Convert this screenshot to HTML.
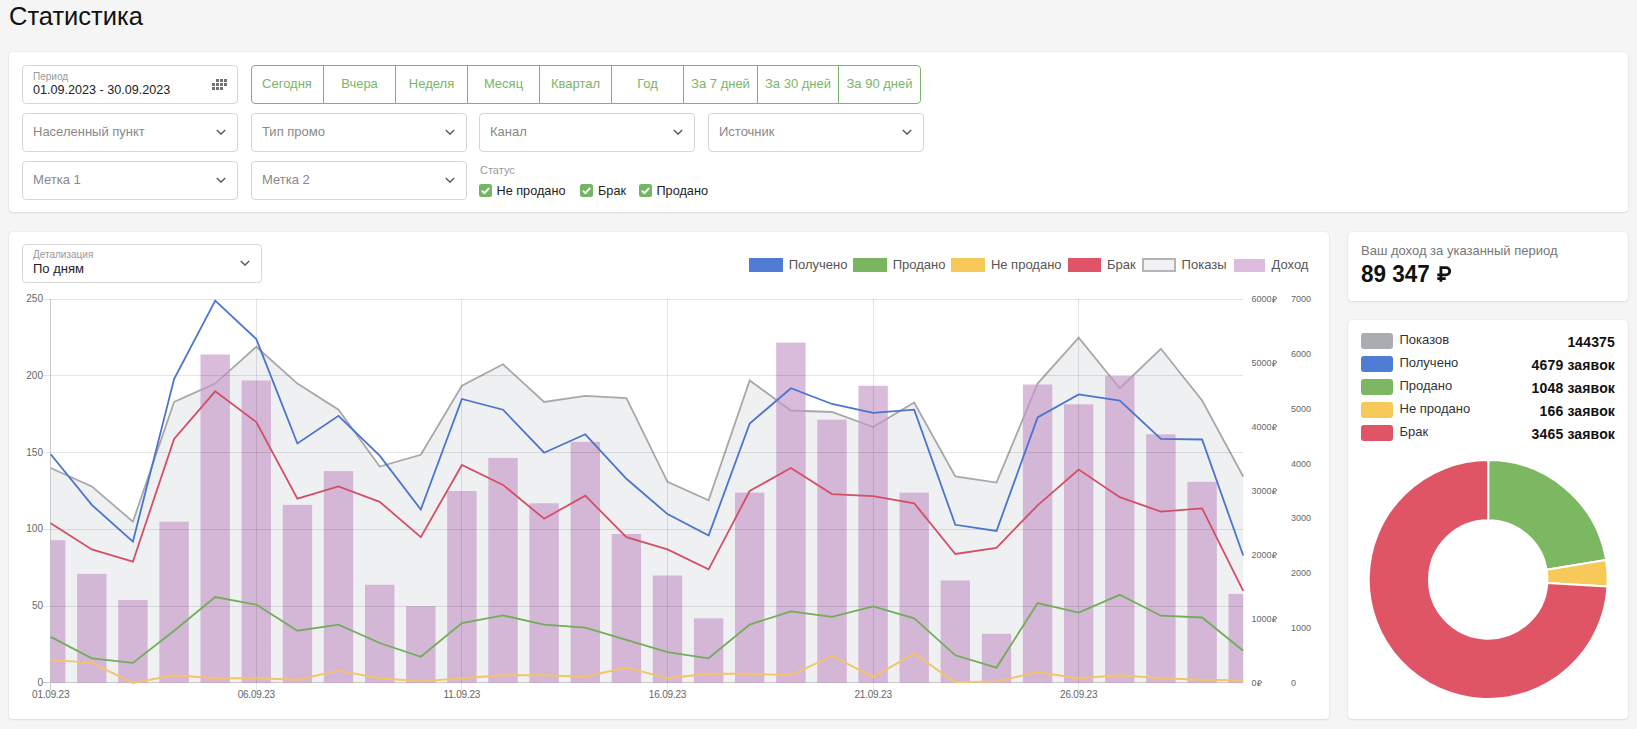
<!DOCTYPE html>
<html><head><meta charset="utf-8"><style>
*{margin:0;padding:0;box-sizing:border-box}
html,body{width:1637px;height:729px;overflow:hidden;background:#f5f5f5;font-family:"Liberation Sans",sans-serif;color:#222;position:relative}
.abs{position:absolute}
h1{position:absolute;left:9px;top:2px;font-size:25.5px;font-weight:normal;color:#111;letter-spacing:0}
.card{position:absolute;background:#fff;border-radius:4px;box-shadow:0 0 2px rgba(0,0,0,0.10),0 1px 2px rgba(0,0,0,0.08)}
.inp{position:absolute;left:22px;top:65px;width:216px;height:39px;border:1px solid #d6d6d6;border-radius:4px;background:#fff}
.inp .lab{position:absolute;left:10px;top:4.5px;font-size:10px;color:#999}
.inp .val{position:absolute;left:10px;top:17px;font-size:12.6px;color:#222}
.sq{position:absolute;width:3px;height:3px;background:#727272}
.btns{position:absolute;left:251px;top:65px;width:670px;height:39px;border:1px solid #7cb46b;border-radius:4px;overflow:hidden}
.btn{position:absolute;top:0;height:100%;border-left:1px solid #7cb46b;color:#7cb46b;font-size:13px;text-align:center;line-height:36px}
.btn:first-child{border-left:none}
.sel{position:absolute;height:39px;border:1px solid #d6d6d6;border-radius:4px;background:#fff}
.sel .ph{position:absolute;left:10px;top:10.2px;font-size:13px;color:#888}
.chev{position:absolute;right:11px;top:15px}
.stat{position:absolute;left:480px;top:163.5px;font-size:11px;color:#999}
.cb{position:absolute;top:183.5px;height:14px;font-size:12.7px;color:#222;display:flex;align-items:center}
.cb svg{margin-right:5px}
.det{position:absolute;left:22px;top:244px;width:240px;height:39px;border:1px solid #d6d6d6;border-radius:4px}
.det .lab{position:absolute;left:10px;top:4px;font-size:10px;color:#999}
.det .val{position:absolute;left:10px;top:16px;font-size:13px;color:#222}
.det .chev{right:11px;top:15px}
.lbox{position:absolute;top:258px;width:33.5px;height:14px}
.ltxt{position:absolute;top:257px;font-size:13px;color:#555}
.yl{position:absolute;left:0;width:43px;text-align:right;font-size:10px;color:#666}
.xl{position:absolute;top:689px;width:60px;text-align:center;font-size:10px;letter-spacing:-0.2px;color:#666}
.rl1{position:absolute;left:1251.5px;font-size:9px;color:#666}
.rl2{position:absolute;left:1291px;font-size:9px;color:#666}
.rub{display:inline-block;vertical-align:baseline}
.inc1{position:absolute;left:1361px;top:243px;font-size:13px;color:#777}
.inc2{position:absolute;left:1361px;top:261.5px;transform:scaleY(1.07);transform-origin:0 21px;font-size:22.5px;font-weight:bold;color:#111}
.pbox{position:absolute;left:1361px;width:32px;height:15.5px;border-radius:3px}
.ptxt{position:absolute;left:1399.5px;font-size:13px;color:#333}
.pval{position:absolute;right:22px;font-size:14px;font-weight:bold;color:#111;text-align:right;letter-spacing:0.15px;margin-top:0.5px}
</style></head><body>
<h1>Статистика</h1>
<div class="card" style="left:9px;top:52px;width:1619px;height:160px"></div>
<div class="inp"><div class="lab">Период</div><div class="val">01.09.2023 - 30.09.2023</div></div>
<div class="sq" style="left:216px;top:79px"></div><div class="sq" style="left:220px;top:79px"></div><div class="sq" style="left:224px;top:79px"></div><div class="sq" style="left:212px;top:83px"></div><div class="sq" style="left:216px;top:83px"></div><div class="sq" style="left:220px;top:83px"></div><div class="sq" style="left:224px;top:83px"></div><div class="sq" style="left:212px;top:87px"></div><div class="sq" style="left:216px;top:87px"></div><div class="sq" style="left:220px;top:87px"></div>
<div class="btns"><div class="btn" style="left:-1.0px;width:72.0px">Сегодня</div><div class="btn" style="left:71.0px;width:72.0px">Вчера</div><div class="btn" style="left:143.0px;width:72.0px">Неделя</div><div class="btn" style="left:215.0px;width:72.0px">Месяц</div><div class="btn" style="left:287.0px;width:72.0px">Квартал</div><div class="btn" style="left:359.0px;width:72.0px">Год</div><div class="btn" style="left:431.0px;width:74.0px">За 7 дней</div><div class="btn" style="left:505.0px;width:81.0px">За 30 дней</div><div class="btn" style="left:586.0px;width:82.0px">За 90 дней</div></div>
<div class="sel" style="left:22px;top:113px;width:216px"><span class="ph">Населенный пункт</span><svg class="chev" width="10" height="6" viewBox="0 0 10 6"><path d="M0.8 0.9l4.2 4.2 4.2-4.2" fill="none" stroke="#5a5a5a" stroke-width="1.4"/></svg></div>
<div class="sel" style="left:251px;top:113px;width:216px"><span class="ph">Тип промо</span><svg class="chev" width="10" height="6" viewBox="0 0 10 6"><path d="M0.8 0.9l4.2 4.2 4.2-4.2" fill="none" stroke="#5a5a5a" stroke-width="1.4"/></svg></div>
<div class="sel" style="left:479px;top:113px;width:216px"><span class="ph">Канал</span><svg class="chev" width="10" height="6" viewBox="0 0 10 6"><path d="M0.8 0.9l4.2 4.2 4.2-4.2" fill="none" stroke="#5a5a5a" stroke-width="1.4"/></svg></div>
<div class="sel" style="left:708px;top:113px;width:216px"><span class="ph">Источник</span><svg class="chev" width="10" height="6" viewBox="0 0 10 6"><path d="M0.8 0.9l4.2 4.2 4.2-4.2" fill="none" stroke="#5a5a5a" stroke-width="1.4"/></svg></div>
<div class="sel" style="left:22px;top:161px;width:216px"><span class="ph">Метка 1</span><svg class="chev" width="10" height="6" viewBox="0 0 10 6"><path d="M0.8 0.9l4.2 4.2 4.2-4.2" fill="none" stroke="#5a5a5a" stroke-width="1.4"/></svg></div>
<div class="sel" style="left:251px;top:161px;width:216px"><span class="ph">Метка 2</span><svg class="chev" width="10" height="6" viewBox="0 0 10 6"><path d="M0.8 0.9l4.2 4.2 4.2-4.2" fill="none" stroke="#5a5a5a" stroke-width="1.4"/></svg></div>
<div class="stat">Статус</div>
<div class="cb" style="left:478.5px"><svg width="13" height="13" viewBox="0 0 13 13"><rect x="0" y="0" width="13" height="13" rx="2.5" fill="#73b563"/><path d="M2.8 6.6l2.6 2.6 4.8-5.2" fill="none" stroke="#fff" stroke-width="1.9"/></svg>Не продано</div>
<div class="cb" style="left:580px"><svg width="13" height="13" viewBox="0 0 13 13"><rect x="0" y="0" width="13" height="13" rx="2.5" fill="#73b563"/><path d="M2.8 6.6l2.6 2.6 4.8-5.2" fill="none" stroke="#fff" stroke-width="1.9"/></svg>Брак</div>
<div class="cb" style="left:638.5px"><svg width="13" height="13" viewBox="0 0 13 13"><rect x="0" y="0" width="13" height="13" rx="2.5" fill="#73b563"/><path d="M2.8 6.6l2.6 2.6 4.8-5.2" fill="none" stroke="#fff" stroke-width="1.9"/></svg>Продано</div>

<div class="card" style="left:9px;top:232px;width:1320px;height:487px"></div>
<div class="det"><div class="lab">Детализация</div><div class="val">По дням</div><svg class="chev" width="10" height="6" viewBox="0 0 10 6"><path d="M0.8 0.9l4.2 4.2 4.2-4.2" fill="none" stroke="#5a5a5a" stroke-width="1.4"/></svg></div>
<div class="lbox" style="left:749px;background:#4f7cd5;"></div><div class="ltxt" style="left:788.7px">Получено</div><div class="lbox" style="left:853px;background:#7ab660;"></div><div class="ltxt" style="left:892.7px">Продано</div><div class="lbox" style="left:951.4px;background:#f7c85a;"></div><div class="ltxt" style="left:990.9px">Не продано</div><div class="lbox" style="left:1067.5px;background:#df5467;"></div><div class="ltxt" style="left:1107px">Брак</div><div class="lbox" style="left:1142px;background:#eff1f4;border:2px solid #b4b4b4;box-sizing:border-box;"></div><div class="ltxt" style="left:1181.6px">Показы</div><div class="lbox" style="left:1234px;background:#dcbcdf;width:31px;top:259px;height:12.5px;"></div><div class="ltxt" style="left:1271.5px">Доход</div>
<svg class="abs" style="left:0;top:0" width="1637" height="729" viewBox="0 0 1637 729">
<polygon points="50.7,682.9 50.7,468.0 91.8,486.4 132.9,521.7 174.1,402.0 215.2,383.6 256.3,346.8 297.4,383.6 338.5,409.7 379.7,466.5 420.8,454.8 461.9,385.8 503.0,364.3 544.1,402.0 585.3,395.9 626.4,398.2 667.5,481.8 708.6,500.3 749.7,380.5 790.9,410.5 832.0,412.0 873.1,427.0 914.2,402.5 955.3,476.5 996.5,482.6 1037.6,383.6 1078.7,337.6 1119.8,388.2 1160.9,348.8 1202.1,400.5 1243.2,476.5 1243.2,682.9" fill="#eff0f2"/>
<polyline points="50.7,468.0 91.8,486.4 132.9,521.7 174.1,402.0 215.2,383.6 256.3,346.8 297.4,383.6 338.5,409.7 379.7,466.5 420.8,454.8 461.9,385.8 503.0,364.3 544.1,402.0 585.3,395.9 626.4,398.2 667.5,481.8 708.6,500.3 749.7,380.5 790.9,410.5 832.0,412.0 873.1,427.0 914.2,402.5 955.3,476.5 996.5,482.6 1037.6,383.6 1078.7,337.6 1119.8,388.2 1160.9,348.8 1202.1,400.5 1243.2,476.5" fill="none" stroke="#a8a8a8" stroke-width="1.8"/>
<line x1="50.5" y1="299" x2="50.5" y2="690" stroke="#c8c8c8" stroke-width="1"/>
<line x1="43" y1="682.5" x2="1243" y2="682.5" stroke="#c8c8c8" stroke-width="1"/>
<g fill="rgba(196,150,200,0.65)">
<rect x="50.7" y="540.2" width="14.7" height="142.7"/>
<rect x="77.1" y="573.9" width="29.4" height="109.0"/>
<rect x="118.2" y="600.0" width="29.4" height="82.9"/>
<rect x="159.4" y="521.7" width="29.4" height="161.2"/>
<rect x="200.5" y="354.5" width="29.4" height="328.4"/>
<rect x="241.6" y="380.5" width="29.4" height="302.4"/>
<rect x="282.7" y="504.9" width="29.4" height="178.0"/>
<rect x="323.8" y="471.1" width="29.4" height="211.8"/>
<rect x="365.0" y="584.7" width="29.4" height="98.2"/>
<rect x="406.1" y="606.2" width="29.4" height="76.7"/>
<rect x="447.2" y="491.0" width="29.4" height="191.9"/>
<rect x="488.3" y="457.9" width="29.4" height="225.0"/>
<rect x="529.4" y="503.3" width="29.4" height="179.6"/>
<rect x="570.6" y="441.9" width="29.4" height="241.0"/>
<rect x="611.7" y="534.0" width="29.4" height="148.9"/>
<rect x="652.8" y="575.5" width="29.4" height="107.4"/>
<rect x="693.9" y="618.4" width="29.4" height="64.5"/>
<rect x="735.0" y="492.6" width="29.4" height="190.3"/>
<rect x="776.2" y="342.6" width="29.4" height="340.3"/>
<rect x="817.3" y="419.7" width="29.4" height="263.2"/>
<rect x="858.4" y="385.8" width="29.4" height="297.1"/>
<rect x="899.5" y="492.6" width="29.4" height="190.3"/>
<rect x="940.6" y="580.5" width="29.4" height="102.4"/>
<rect x="981.8" y="633.8" width="29.4" height="49.1"/>
<rect x="1022.9" y="384.5" width="29.4" height="298.4"/>
<rect x="1064.0" y="404.3" width="29.4" height="278.6"/>
<rect x="1105.1" y="375.9" width="29.4" height="307.0"/>
<rect x="1146.2" y="434.3" width="29.4" height="248.6"/>
<rect x="1187.4" y="481.8" width="29.4" height="201.1"/>
<rect x="1228.5" y="593.9" width="14.7" height="89.0"/>
</g>
<line x1="43" y1="606.5" x2="1243" y2="606.5" stroke="rgba(0,0,0,0.1)" stroke-width="1"/>
<line x1="43" y1="529.5" x2="1243" y2="529.5" stroke="rgba(0,0,0,0.1)" stroke-width="1"/>
<line x1="43" y1="452.5" x2="1243" y2="452.5" stroke="rgba(0,0,0,0.1)" stroke-width="1"/>
<line x1="43" y1="375.5" x2="1243" y2="375.5" stroke="rgba(0,0,0,0.1)" stroke-width="1"/>
<line x1="43" y1="299.5" x2="1243" y2="299.5" stroke="rgba(0,0,0,0.1)" stroke-width="1"/>
<line x1="256.5" y1="299" x2="256.5" y2="691" stroke="rgba(0,0,0,0.1)" stroke-width="1"/>
<line x1="461.5" y1="299" x2="461.5" y2="691" stroke="rgba(0,0,0,0.1)" stroke-width="1"/>
<line x1="667.5" y1="299" x2="667.5" y2="691" stroke="rgba(0,0,0,0.1)" stroke-width="1"/>
<line x1="873.5" y1="299" x2="873.5" y2="691" stroke="rgba(0,0,0,0.1)" stroke-width="1"/>
<line x1="1078.5" y1="299" x2="1078.5" y2="691" stroke="rgba(0,0,0,0.1)" stroke-width="1"/>
<polyline points="50.7,454.2 91.8,504.9 132.9,541.7 174.1,379.0 215.2,300.7 256.3,339.1 297.4,443.5 338.5,415.8 379.7,455.7 420.8,509.5 461.9,399.0 503.0,409.7 544.1,452.7 585.3,434.3 626.4,478.8 667.5,514.1 708.6,535.6 749.7,423.5 790.9,388.2 832.0,404.0 873.1,412.8 914.2,409.7 955.3,524.8 996.5,531.0 1037.6,417.4 1078.7,394.4 1119.8,400.5 1160.9,438.9 1202.1,439.5 1243.2,555.5" fill="none" stroke="#4b74cc" stroke-width="1.8" stroke-linejoin="miter"/>
<polyline points="50.7,523.3 91.8,549.4 132.9,561.7 174.1,438.9 215.2,391.3 256.3,422.0 297.4,498.7 338.5,486.4 379.7,501.8 420.8,537.1 461.9,465.0 503.0,484.9 544.1,518.7 585.3,495.7 626.4,537.1 667.5,549.4 708.6,569.3 749.7,491.0 790.9,468.0 832.0,494.1 873.1,496.1 914.2,503.3 955.3,554.0 996.5,547.8 1037.6,505.3 1078.7,469.6 1119.8,497.2 1160.9,511.6 1202.1,508.4 1243.2,590.8" fill="none" stroke="#d34f66" stroke-width="1.8" stroke-linejoin="miter"/>
<polyline points="50.7,636.9 91.8,658.3 132.9,662.9 174.1,630.7 215.2,597.0 256.3,604.6 297.4,630.7 338.5,624.6 379.7,643.0 420.8,656.8 461.9,623.0 503.0,615.4 544.1,624.6 585.3,627.6 626.4,639.9 667.5,652.2 708.6,658.3 749.7,624.6 790.9,611.4 832.0,616.9 873.1,606.5 914.2,618.4 955.3,655.3 996.5,667.6 1037.6,603.1 1078.7,612.6 1119.8,594.8 1160.9,615.7 1202.1,617.5 1243.2,650.7" fill="none" stroke="#72ad5a" stroke-width="1.8" stroke-linejoin="miter"/>
<polyline points="50.7,659.9 91.8,662.9 132.9,682.9 174.1,675.2 215.2,678.3 256.3,678.3 297.4,679.8 338.5,670.6 379.7,678.3 420.8,681.4 461.9,678.3 503.0,675.2 544.1,675.2 585.3,676.8 626.4,667.6 667.5,678.3 708.6,673.7 749.7,673.7 790.9,675.2 832.0,656.0 873.1,676.8 914.2,653.7 955.3,682.3 996.5,681.4 1037.6,672.2 1078.7,678.3 1119.8,675.2 1160.9,678.3 1202.1,679.8 1243.2,680.4" fill="none" stroke="#f3c468" stroke-width="1.9" stroke-linejoin="miter"/>
</svg>
<div class="yl" style="top:676.9px">0</div>
<div class="yl" style="top:600.2px">50</div>
<div class="yl" style="top:523.4px">100</div>
<div class="yl" style="top:446.7px">150</div>
<div class="yl" style="top:369.9px">200</div>
<div class="yl" style="top:293.2px">250</div>
<div class="xl" style="left:20.7px">01.09.23</div>
<div class="xl" style="left:226.3px">06.09.23</div>
<div class="xl" style="left:431.9px">11.09.23</div>
<div class="xl" style="left:637.5px">16.09.23</div>
<div class="xl" style="left:843.1px">21.09.23</div>
<div class="xl" style="left:1048.7px">26.09.23</div>
<div class="rl1" style="top:677.6px">0<svg class="rub" viewBox="0 0 11 13" width="5.5" height="6.5" style="vertical-align:-0.5px"><path d="M2.6 13.5V1.4H6.3a2.7 2.7 0 0 1 0 5.4H0.3M0.3 10.3H7.5" fill="none" stroke="#666" stroke-width="1.8"/></svg></div>
<div class="rl1" style="top:613.7px">1000<svg class="rub" viewBox="0 0 11 13" width="5.5" height="6.5" style="vertical-align:-0.5px"><path d="M2.6 13.5V1.4H6.3a2.7 2.7 0 0 1 0 5.4H0.3M0.3 10.3H7.5" fill="none" stroke="#666" stroke-width="1.8"/></svg></div>
<div class="rl1" style="top:549.8px">2000<svg class="rub" viewBox="0 0 11 13" width="5.5" height="6.5" style="vertical-align:-0.5px"><path d="M2.6 13.5V1.4H6.3a2.7 2.7 0 0 1 0 5.4H0.3M0.3 10.3H7.5" fill="none" stroke="#666" stroke-width="1.8"/></svg></div>
<div class="rl1" style="top:485.8px">3000<svg class="rub" viewBox="0 0 11 13" width="5.5" height="6.5" style="vertical-align:-0.5px"><path d="M2.6 13.5V1.4H6.3a2.7 2.7 0 0 1 0 5.4H0.3M0.3 10.3H7.5" fill="none" stroke="#666" stroke-width="1.8"/></svg></div>
<div class="rl1" style="top:421.9px">4000<svg class="rub" viewBox="0 0 11 13" width="5.5" height="6.5" style="vertical-align:-0.5px"><path d="M2.6 13.5V1.4H6.3a2.7 2.7 0 0 1 0 5.4H0.3M0.3 10.3H7.5" fill="none" stroke="#666" stroke-width="1.8"/></svg></div>
<div class="rl1" style="top:358.0px">5000<svg class="rub" viewBox="0 0 11 13" width="5.5" height="6.5" style="vertical-align:-0.5px"><path d="M2.6 13.5V1.4H6.3a2.7 2.7 0 0 1 0 5.4H0.3M0.3 10.3H7.5" fill="none" stroke="#666" stroke-width="1.8"/></svg></div>
<div class="rl1" style="top:294.1px">6000<svg class="rub" viewBox="0 0 11 13" width="5.5" height="6.5" style="vertical-align:-0.5px"><path d="M2.6 13.5V1.4H6.3a2.7 2.7 0 0 1 0 5.4H0.3M0.3 10.3H7.5" fill="none" stroke="#666" stroke-width="1.8"/></svg></div>
<div class="rl2" style="top:677.6px">0</div>
<div class="rl2" style="top:622.8px">1000</div>
<div class="rl2" style="top:568.0px">2000</div>
<div class="rl2" style="top:513.2px">3000</div>
<div class="rl2" style="top:458.5px">4000</div>
<div class="rl2" style="top:403.7px">5000</div>
<div class="rl2" style="top:348.9px">6000</div>
<div class="rl2" style="top:294.1px">7000</div>

<div class="card" style="left:1348px;top:232px;width:280px;height:68.5px"></div>
<div class="inc1">Ваш доход за указанный период</div>
<div class="inc2">89 347</div><svg class="abs" style="left:1437px;top:266px" width="16" height="17" viewBox="0 0 16 17"><path d="M3.9 15.7V1.6H9.1A3.6 3.6 0 0 1 9.1 8.8H0.3M0.3 12.7H8.7" fill="none" stroke="#111" stroke-width="2.8"/></svg>

<div class="card" style="left:1348px;top:320px;width:280px;height:399px"></div>
<div class="pbox" style="top:333px;background:#a9adb3"></div><div class="ptxt" style="top:332px">Показов</div><div class="pval" style="top:333px">144375</div><div class="pbox" style="top:356px;background:#4f7cd5"></div><div class="ptxt" style="top:355px">Получено</div><div class="pval" style="top:356px">4679 заявок</div><div class="pbox" style="top:379px;background:#7cb862"></div><div class="ptxt" style="top:378px">Продано</div><div class="pval" style="top:379px">1048 заявок</div><div class="pbox" style="top:402px;background:#f7c958"></div><div class="ptxt" style="top:401px">Не продано</div><div class="pval" style="top:402px">166 заявок</div><div class="pbox" style="top:425px;background:#e05566"></div><div class="ptxt" style="top:424px">Брак</div><div class="pval" style="top:425px">3465 заявок</div>
<svg class="abs" style="left:0;top:0" width="1637" height="729" viewBox="0 0 1637 729">
<path d="M1488.20,460.00 A119.5,119.5 0 0 1 1606.11,560.05 L1546.61,569.86 A59.2,59.2 0 0 0 1488.20,520.30 Z" fill="#7cb862" stroke="#fff" stroke-width="2" stroke-linejoin="bevel"/>
<path d="M1606.11,560.05 A119.5,119.5 0 0 1 1607.49,586.60 L1547.30,583.02 A59.2,59.2 0 0 0 1546.61,569.86 Z" fill="#f7c958" stroke="#fff" stroke-width="2" stroke-linejoin="bevel"/>
<path d="M1607.49,586.60 A119.5,119.5 0 1 1 1488.20,460.00 L1488.20,520.30 A59.2,59.2 0 1 0 1547.30,583.02 Z" fill="#e05566" stroke="#fff" stroke-width="2" stroke-linejoin="bevel"/>
</svg>
</body></html>
